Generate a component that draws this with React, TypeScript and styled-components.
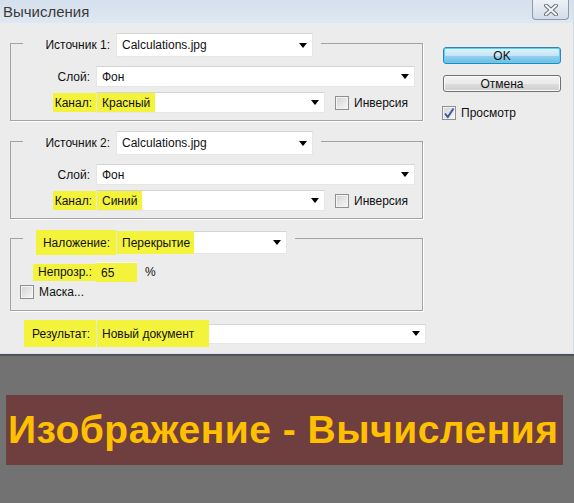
import React from 'react';
import styled, { createGlobalStyle, css } from 'styled-components';

const GlobalStyle = createGlobalStyle`
	html, body {
		margin: 0;
		padding: 0;
	}
	body {
		font-family: "Liberation Sans", Arial, sans-serif;
		background: #727272;
	}
`;

const MARK = '#f4f33c';

const Page = styled.div`
	width: 574px;
	height: 503px;
	display: flex;
	flex-direction: column;
	overflow: hidden;
`;

const Window = styled.div`
	height: 354px;
	box-sizing: border-box;
	display: flex;
	flex-direction: column;
	background: #ececec;
	border-right: 1px solid #d3dbe6;
	border-bottom: 1px solid #d9e0ea;
	font-size: 12px;
	color: #111;
`;

const TitleBar = styled.div`
	height: 23px;
	flex: none;
	display: flex;
	justify-content: space-between;
	align-items: flex-start;
	background: linear-gradient(#d4e0ed, #dfe8f2);
`;

const Title = styled.div`
	padding: 3px 0 0 3px;
	font-size: 15px;
	color: #3a3a3a;
`;

const CloseButton = styled.div`
	width: 37px;
	height: 20px;
	box-sizing: border-box;
	margin-right: 4px;
	display: flex;
	align-items: center;
	justify-content: center;
	border: 1px solid #8d9aab;
	border-top: none;
	border-radius: 0 0 4px 4px;
	background: linear-gradient(#eef2f7, #d3dce7);
`;

const Body = styled.div`
	flex: 1;
	display: flex;
	padding-top: 20px;
`;

const Main = styled.div`
	width: 433px;
	flex: none;
	display: flex;
	flex-direction: column;
`;

const Side = styled.div`
	width: 118px;
	margin-left: 10px;
	display: flex;
	flex-direction: column;
`;

const Group = styled.div<{ $top?: number; $bottom: number }>`
	margin: ${({ $top }) => $top ?? 0}px 0 0 10px;
	width: 413px;
	box-sizing: border-box;
	border: 1px solid #a3a3a3;
	box-shadow: 1px 1px 0 #fff;
	padding-bottom: ${({ $bottom }) => $bottom}px;
	display: flex;
	flex-direction: column;
`;

const GroupHead = styled.div<{ $lift: number; $height: number }>`
	margin: -${({ $lift }) => $lift}px 0 0 12px;
	height: ${({ $height }) => $height}px;
	width: fit-content;
	padding-right: 8px;
	display: flex;
	align-items: center;
	background: #ececec;
`;

const Row = styled.div<{ $gap: number; $height?: number }>`
	margin-top: ${({ $gap }) => $gap}px;
	height: ${({ $height }) => ($height ? `${$height}px` : 'auto')};
	display: flex;
	align-items: center;
`;

const Label = styled.div<{ $width: number; $pad?: number }>`
	width: ${({ $width }) => $width}px;
	flex: none;
	display: flex;
	justify-content: flex-end;
	align-items: center;
	padding-right: ${({ $pad }) => $pad ?? 0}px;
	box-sizing: border-box;
	white-space: nowrap;
`;

const Mark = styled.span<{ $h: number; $l: number; $r: number }>`
	display: inline-flex;
	align-items: center;
	height: ${({ $h }) => $h}px;
	padding: 0 ${({ $r }) => $r}px 0 ${({ $l }) => $l}px;
	background: ${MARK};
	white-space: nowrap;
`;

const Combo = styled.div<{ $width: number; $height: number }>`
	width: ${({ $width }) => $width}px;
	height: ${({ $height }) => $height}px;
	flex: none;
	box-sizing: border-box;
	display: flex;
	align-items: center;
	justify-content: space-between;
	background: #fff;
	border: 1px solid #e6e6e6;
	border-top-color: #d4d4d4;
	padding-right: 5px;
`;

const Value = styled.span<{ $mark?: boolean; $h?: number; $r?: number }>`
	display: inline-flex;
	align-items: center;
	align-self: center;
	padding: 0 ${({ $r }) => $r ?? 0}px 0 5px;
	white-space: nowrap;
	${({ $mark, $h }) =>
		$mark &&
		css`
			background: ${MARK};
			height: ${$h ?? 19}px;
		`}
`;

const Arrow = styled.span`
	width: 0;
	height: 0;
	border-left: 4px solid transparent;
	border-right: 4px solid transparent;
	border-top: 5px solid #000;
`;

const Box = styled.span<{ $left?: number }>`
	width: 14px;
	height: 14px;
	flex: none;
	box-sizing: border-box;
	margin-left: ${({ $left }) => $left ?? 0}px;
	display: flex;
	align-items: center;
	justify-content: center;
	border: 1px solid #8e8f8f;
	box-shadow: inset 0 0 0 1px #f4f4f4;
	background: linear-gradient(135deg, #d2d2d2, #f8f8f8);
`;

const CheckText = styled.span`
	margin-left: 5px;
	white-space: nowrap;
`;

const Field = styled.div`
	width: 41px;
	height: 20px;
	box-sizing: border-box;
	padding-top: 1px;
	background: #fff;
	display: flex;
`;

const FieldValue = styled.span`
	flex: 1;
	display: flex;
	align-items: center;
	padding-left: 5px;
	background: ${MARK};
`;

const Percent = styled.span`
	margin-left: 8px;
`;

const Button = styled.div<{ $primary?: boolean; $gap: number }>`
	margin-top: ${({ $gap }) => $gap}px;
	height: 17px;
	box-sizing: border-box;
	display: flex;
	align-items: center;
	justify-content: center;
	border-radius: 3px;
	border: 1px solid #707070;
	background: linear-gradient(#f2f2f2 0%, #ebebeb 50%, #dddddd 51%, #cfcfcf 100%);
	box-shadow: inset 0 0 0 1px #fbfbfb;

	${({ $primary }) =>
		$primary &&
		css`
			border-color: #3c7fb1;
			background: linear-gradient(#e5f4fc 0%, #c4e5f6 50%, #98d1ef 51%, #6cbce6 100%);
			box-shadow: inset 0 0 0 1px #48d8fb;
		`}
`;

const SideCheck = styled.div`
	margin-top: 14px;
	margin-left: -1px;
	display: flex;
	align-items: center;
`;

const Banner = styled.div`
	flex: 1;
	background: #727272;
	border-top: 2px solid #51515a;
	padding: 39px 11px 0 6px;
`;

const BannerBox = styled.div`
	height: 70px;
	display: flex;
	align-items: center;
	padding-left: 2px;
	background: #6f3f40;
	color: #ffc000;
	font: bold 39px "Liberation Sans", Arial, sans-serif;
	letter-spacing: 0.5px;
	white-space: nowrap;
`;

const CloseGlyph = () => (
	<svg width="16" height="12" viewBox="0 0 16 12">
		<path d="M3 1.5 L13 10.5 M13 1.5 L3 10.5" stroke="#6b6f76" strokeWidth="4" strokeLinecap="round" />
		<path d="M3 1.5 L13 10.5 M13 1.5 L3 10.5" stroke="#f4f6f9" strokeWidth="2" strokeLinecap="round" />
	</svg>
);

const Tick = () => (
	<svg width="12" height="12" viewBox="0 0 12 12">
		<path d="M2 6.5 L4.8 10 L10.5 1.5" stroke="#3f5c9c" strokeWidth="2" fill="none" />
	</svg>
);

interface SourceProps {
	index: number;
	channel: string;
	top?: number;
}

const SourceGroup = ({ index, channel, top }: SourceProps) => (
	<Group $top={top} $bottom={7}>
		<GroupHead $lift={11} $height={24}>
			<Label $width={93} $pad={6}>
				Источник {index}:
			</Label>
			<Combo $width={197} $height={24}>
				<Value>Calculations.jpg</Value>
				<Arrow />
			</Combo>
		</GroupHead>
		<Row $gap={9}>
			<Label $width={85} $pad={6}>
				Слой:
			</Label>
			<Combo $width={319} $height={21}>
				<Value>Фон</Value>
				<Arrow />
			</Combo>
		</Row>
		<Row $gap={5}>
			<Label $width={85}>
				<Mark $h={19} $l={2} $r={4}>
					Канал:
				</Mark>
			</Label>
			<Combo $width={229} $height={21}>
				<Value $mark $r={5}>
					{channel}
				</Value>
				<Arrow />
			</Combo>
			<Box $left={10} />
			<CheckText>Инверсия</CheckText>
		</Row>
	</Group>
);

export default function App() {
	return (
		<Page>
			<GlobalStyle />
			<Window>
				<TitleBar>
					<Title>Вычисления</Title>
					<CloseButton>
						<CloseGlyph />
					</CloseButton>
				</TitleBar>
				<Body>
					<Main>
						<SourceGroup index={1} channel="Красный" />
						<SourceGroup index={2} channel="Синий" top={20} />
						<Group $top={19} $bottom={11}>
							<GroupHead $lift={9} $height={25}>
								<Label $width={93}>
									<Mark $h={25} $l={7} $r={6}>
										Наложение:
									</Mark>
								</Label>
								<Combo $width={171} $height={23}>
									<Value $mark $h={23} $r={4}>
										Перекрытие
									</Value>
									<Arrow />
								</Combo>
							</GroupHead>
							<Row $gap={7}>
								<Label $width={85}>
									<Mark $h={17} $l={5} $r={4}>
										Непрозр.:
									</Mark>
								</Label>
								<Field>
									<FieldValue>65</FieldValue>
								</Field>
								<Percent>%</Percent>
							</Row>
							<Row $gap={3}>
								<Box $left={9} />
								<CheckText>Маска...</CheckText>
							</Row>
						</Group>
						<Row $gap={9} $height={27}>
							<Label $width={96}>
								<Mark $h={27} $l={8} $r={6}>
									Результат:
								</Mark>
							</Label>
							<Combo $width={330} $height={20}>
								<Value $mark $h={27} $r={15}>
									Новый документ
								</Value>
								<Arrow />
							</Combo>
						</Row>
					</Main>
					<Side>
						<Button $primary $gap={4}>
							OK
						</Button>
						<Button $gap={11}>Отмена</Button>
						<SideCheck>
							<Box>
								<Tick />
							</Box>
							<CheckText>Просмотр</CheckText>
						</SideCheck>
					</Side>
				</Body>
			</Window>
			<Banner>
				<BannerBox>Изображение - Вычисления</BannerBox>
			</Banner>
		</Page>
	);
}
